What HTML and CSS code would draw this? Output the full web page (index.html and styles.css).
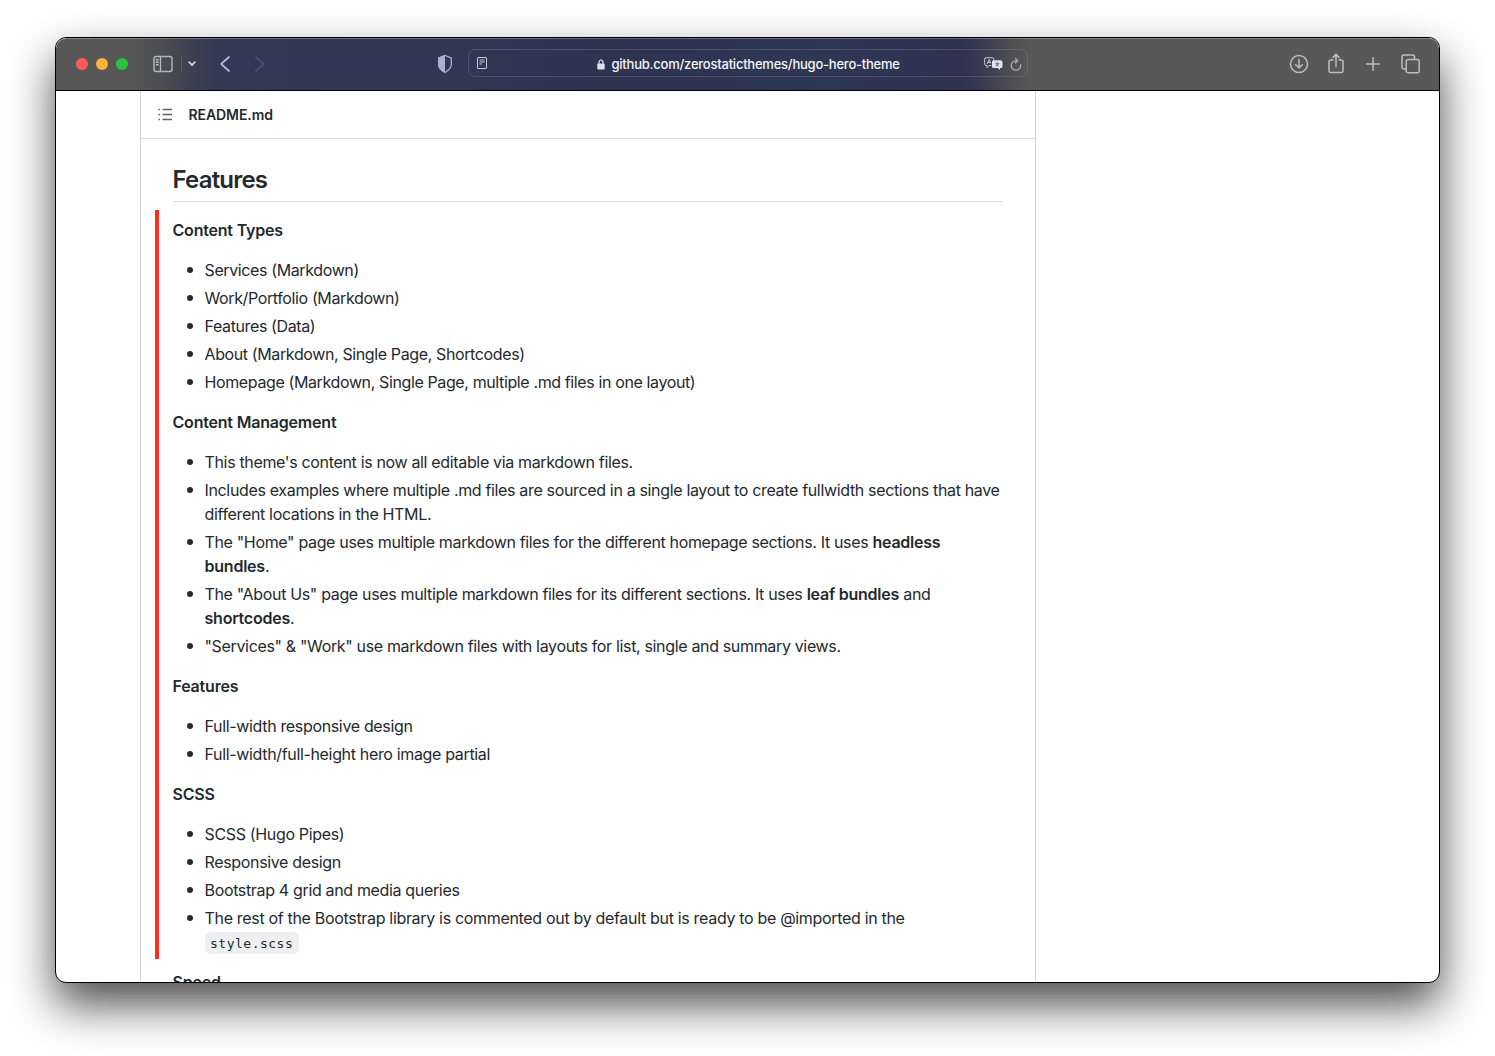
FILE: index.html
```html
<!DOCTYPE html>
<html lang="en">
<head>
<meta charset="utf-8">
<title>hugo-hero-theme</title>
<link rel="stylesheet" href="styles.css">
</head>
<body>
<div class="window">
  <header class="toolbar">
    <div class="lights"><i class="light red"></i><i class="light amber"></i><i class="light green"></i></div>
    <svg class="ic sidebar" width="20" height="18" viewBox="0 0 20 18"><rect x="1" y="1.500" width="18" height="15" rx="2"/><path d="M7.500 1.500v15M3.200 4.700h2M3.200 7.200h2M3.200 9.700h2"/></svg>
    <i class="divider"></i>
    <svg class="ic chevron" width="8" height="6" viewBox="0 0 8 6"><path d="M1.200 1.200 4 4.200l2.800-3"/></svg>
    <svg class="ic back" width="10" height="16" viewBox="0 0 10 16"><path d="M9 1 1.200 8 9 15"/></svg>
    <svg class="ic forward" width="10" height="16" viewBox="0 0 10 16"><path d="m1 1 7.800 7L1 15"/></svg>
    <svg class="shield" width="16" height="20" viewBox="0 0 16 20"><path class="line" d="M8 1.500 14.300 4v6.500c0 3.500-3 6-6.300 8-3.300-2-6.300-4.500-6.300-8V4z"/><path class="fill" d="M8 1 1 3.800v6.700c0 4 3.400 6.600 7 8.500z"/></svg>
    <div class="address">
      <svg class="reader" width="10" height="12" viewBox="0 0 10 12"><rect x=".5" y=".5" width="9" height="11" rx=".5"/><path d="M2.500 3h5M2.500 5h5M2.500 7h2.500"/></svg>
      <svg class="lock" width="8" height="11" viewBox="0 0 8 11"><path class="line" d="M2 5V3.200a2 2 0 0 1 4 0V5"/><rect x=".3" y="4.600" width="7.400" height="6" rx="1"/></svg>
      <span class="url">github.com/zerostaticthemes/hugo-hero-theme</span>
      <svg class="translate" width="19" height="13" viewBox="0 0 19 13"><path class="line" d="M7.500 8.500H5.500L3 10.500v-2H2Q.7 8.500.7 7.200V2Q.7.7 2 .7h6.500Q9.800.7 9.800 2v1M3.200 7l2-4.500 1.700 3.700M4 5.500h2.300"/><path class="fill" d="M9.500 3.200h7.200Q18.500 3.200 18.500 5v4.400q0 1.600-1.700 1.600H16v2l-2.400-2h-4Q8 11 8 9.400V5q0-1.800 1.500-1.800z"/><path class="cut" d="M13.300 4.800v1M11.300 6.500h4M11.800 9q2.200-.6 2.700-2.200M12.200 7q.7 1.500 2.500 2"/></svg>
      <svg class="reload" width="12" height="13" viewBox="0 0 12 13"><path d="M10.600 6.800A4.700 4.700 0 1 1 6 2.800h1.400M5.500.6l2.300 2.200L5.500 5"/></svg>
    </div>
    <svg class="ic download" width="20" height="20" viewBox="0 0 20 20"><circle cx="10" cy="10" r="8.500"/><path d="M10 5.500v8.300M6.700 10.700l3.300 3.300 3.300-3.300"/></svg>
    <svg class="ic share" width="16" height="21" viewBox="0 0 16 21"><path d="M5 7H2.500Q1 7 1 8.500v9Q1 19.500 2.500 19.500h11q1.500 0 1.500-2v-9Q15 7 13.500 7H11M8 13.500V1.500M4.800 4.500 8 1.300l3.200 3.200"/></svg>
    <svg class="ic plus" width="14" height="14" viewBox="0 0 14 14"><path d="M7 .7v12.600M.7 7h12.600"/></svg>
    <svg class="ic tabs" width="19" height="20" viewBox="0 0 19 20"><rect x="5.200" y="5.400" width="13" height="13.400" rx="2"/><path d="M5 15H3Q1 15 1 13V3Q1 1 3 1h8.500q2 0 2 2v2"/></svg>
  </header>
  <main class="page">
    <section class="readme">
      <div class="readme-head">
        <svg class="list-icon" width="15" height="14" viewBox="0 0 15 14"><path d="M4.500 1.500H14M4.500 6.500H14M4.500 11.500H14M.4 1.500h1.500M.4 6.500h1.500M.4 11.500h1.500"/></svg>
        <span>README.md</span>
      </div>
      <article class="body">
        <h2>Features</h2>
        <div class="marked">
          <p>Content Types</p>
          <ul class="types">
            <li>Services (Markdown)</li>
            <li>Work/Portfolio (Markdown)</li>
            <li>Features (Data)</li>
            <li>About (Markdown, Single Page, Shortcodes)</li>
            <li>Homepage (Markdown, Single Page, multiple .md files in one layout)</li>
          </ul>
          <p>Content Management</p>
          <ul>
            <li>This theme's content is now all editable via markdown files.</li>
            <li>Includes examples where multiple .md files are sourced in a single layout to create fullwidth sections that have<br>different locations in the HTML.</li>
            <li>The "Home" page uses multiple markdown files for the different homepage sections. It uses <b>headless<br>bundles</b>.</li>
            <li>The "About Us" page uses multiple markdown files for its different sections. It uses <b>leaf bundles</b> and<br><b>shortcodes</b>.</li>
            <li>"Services" &amp; "Work" use markdown files with layouts for list, single and summary views.</li>
          </ul>
          <p>Features</p>
          <ul>
            <li>Full-width responsive design</li>
            <li>Full-width/full-height hero image partial</li>
          </ul>
          <p>SCSS</p>
          <ul>
            <li>SCSS (Hugo Pipes)</li>
            <li>Responsive design</li>
            <li>Bootstrap 4 grid and media queries</li>
            <li class="wide">The rest of the Bootstrap library is commented out by default but is ready to be @imported in the<br><code>style.scss</code></li>
          </ul>
        </div>
        <p>Speed</p>
      </article>
    </section>
  </main>
</div>
</body>
</html>
```
FILE: styles.css
```css
* { box-sizing: border-box; }
body {
  margin: 0;
  height: 1056px;
  padding: 37px 55px 0;
  overflow: hidden;
  background: #fff;
  color: #24292f;
  font-family: Inter, "Liberation Sans", sans-serif;
}
.window {
  height: 946px;
  border: 1px solid #000;
  border-radius: 11px;
  overflow: hidden;
  display: flex;
  flex-direction: column;
  background: #fff;
  box-shadow: 0 22px 45px rgba(0, 0, 0, .7);
}
.toolbar {
  flex: none;
  height: 53px;
  display: flex;
  align-items: center;
  padding: 0 19px 0 20px;
  border-bottom: 1px solid #000;
  box-shadow: inset 0 1px 0 rgba(255, 255, 255, .25);
  border-radius: 10px 10px 0 0;
  background: linear-gradient(90deg, #585858 0, #575757 75px, #4b4c51 110px, #3b3f50 135px, #313954 165px, #303854 380px, #2e3350 560px, #2d3754 750px, #2f3350 908px, #363850 922px, #43444f 940px, #505053 958px, #585858 976px);
}
.toolbar svg { flex: none; fill: none; }
.ic { stroke: #bdbdbd; stroke-width: 1.5; stroke-linecap: round; stroke-linejoin: round; }
.lights { display: flex; gap: 8px; }
.light { width: 12px; height: 12px; border-radius: 50%; }
.red { background: #ff5a52; }
.amber { background: #fdb436; }
.green { background: #2bc23f; }
.sidebar { margin-left: 25px; stroke: #b6b7bc; stroke-width: 1.4; }
.divider { width: 1px; height: 18px; margin-left: 7.500px; background: #5d5f66; }
.chevron { margin-left: 6px; stroke: #d2d4df; stroke-width: 1.7; }
.back { margin-left: 24px; stroke: #b2bad6; stroke-width: 1.7; }
.forward { margin-left: 25.500px; stroke: #505874; stroke-width: 1.6; }
.shield { margin-left: 171.500px; }
.shield .line { stroke: #aab0cf; stroke-width: 1.3; }
.shield .fill { fill: #aab0cf; }
.address {
  width: 560px;
  height: 28px;
  margin-left: 15px;
  margin-top: -2px;
  padding: 0 5px 0 8px;
  display: flex;
  align-items: center;
  border: 1px solid rgba(160, 165, 195, .24);
  border-radius: 7px;
}
.reader { stroke: #c5c7d3; stroke-width: 1; }
.lock { margin-left: 110px; margin-top: 2px; fill: #dfe0e6 !important; }
.lock .line { fill: none; stroke: #dfe0e6; stroke-width: 1.2; }
.url { margin: 2px 0 0 7px; width: 373px; color: #f4f5fa; font-size: 13px; font-weight: 500; line-height: 16px; letter-spacing: -.23px; white-space: nowrap; }
.translate { margin-top: 1px; }
.translate .line { stroke: #c9cad4; stroke-width: 1; }
.translate .fill { fill: #e2e2e7; }
.translate .cut { stroke: #6a6b78; stroke-width: .9; }
.reload { margin-left: 7px; margin-top: 2px; stroke: #aaaab1; stroke-width: 1.3; stroke-linecap: round; }
.download { margin-left: auto; }
.share { margin-left: 19px; margin-top: -2px; }
.plus { margin-left: 21.500px; }
.tabs { margin-left: 21.500px; margin-top: -1px; }

.page { flex: 1; min-height: 0; overflow: hidden; }
.readme { width: 896px; height: 100%; margin-left: 84px; border: solid #ccd3dc; border-width: 0 1px; }
.readme-head {
  height: 48px;
  padding-left: 17px;
  display: flex;
  align-items: center;
  gap: 15.500px;
  border-bottom: 1px solid #d5dce2;
  font-size: 14px;
  font-weight: 600;
  letter-spacing: -.08px;
}
.list-icon { fill: none; stroke: #57606a; stroke-width: 1.4; }
.body { padding: 26px 32px 0 31.500px; font-size: 16px; line-height: 24px; letter-spacing: -.2px; }
h2 { margin: 0; height: 37px; border-bottom: 1px solid #d8dee4; font-size: 24px; line-height: 30px; font-weight: 600; letter-spacing: -.8px; }
.marked {
  margin: 8px 0 0 -18px;
  padding: 8px 0 5px 14px;
  border-left: 4px solid #fb301c;
}
p { margin: 0 0 16px; font-weight: 600; }
.marked + p { margin-top: 11px; }
ul { margin: 0 0 16px; padding: 0 0 0 32px; list-style: none; letter-spacing: -.34px; }
ul:last-child { margin-bottom: 0; }
.types { letter-spacing: -.38px; }
.wide { letter-spacing: -.32px; }
li { white-space: nowrap; }
li + li { margin-top: 4px; }
li::before { content: ""; float: left; width: 6px; height: 6px; margin: 9px 0 0 -18px; border-radius: 50%; background: #24292f; }
b { font-weight: 600; letter-spacing: -.23px; }
code { display: inline-block; height: 22px; margin-top: 2px; padding: 0 5.500px; border-radius: 6px; background: #eeeff1; font: 13px/23px "DejaVu Sans Mono", monospace; letter-spacing: .5px; vertical-align: top; }
```
